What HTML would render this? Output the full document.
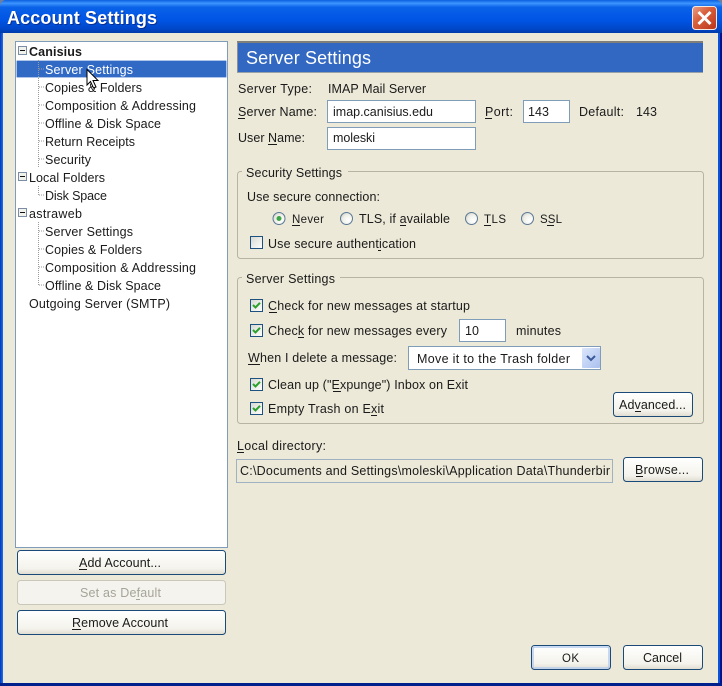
<!DOCTYPE html>
<html><head><meta charset="utf-8"><style>
html,body{margin:0;padding:0;background:#ece9d8;width:722px;height:686px;overflow:hidden}
svg{display:block}
text{font-family:"Liberation Sans",sans-serif;font-size:12.5px;fill:#1a1a1a}
text.s{font-size:11.5px}
</style></head><body>
<svg width="722" height="686" viewBox="0 0 722 686" xmlns="http://www.w3.org/2000/svg">
<defs>
<linearGradient id="tb" x1="0" y1="0" x2="0" y2="1">
<stop offset="0" stop-color="#0a5fe0"/><stop offset=".1" stop-color="#3d95ff"/><stop offset=".22" stop-color="#0a62e8"/><stop offset=".6" stop-color="#0055e5"/><stop offset=".88" stop-color="#0046c8"/><stop offset="1" stop-color="#003ca8"/>
</linearGradient>
<linearGradient id="btn" x1="0" y1="0" x2="0" y2="1">
<stop offset="0" stop-color="#fff"/><stop offset=".75" stop-color="#f4f3ec"/><stop offset="1" stop-color="#dfdbd0"/>
</linearGradient>
<linearGradient id="cl" x1="0" y1="0" x2="1" y2="1">
<stop offset="0" stop-color="#e8a08a"/><stop offset=".4" stop-color="#d9603c"/><stop offset="1" stop-color="#b8341a"/>
</linearGradient>
<linearGradient id="cb" x1="0" y1="0" x2="1" y2="1">
<stop offset="0" stop-color="#d8d8d0"/><stop offset="1" stop-color="#fff"/>
</linearGradient>
<radialGradient id="rb" cx=".65" cy=".65" r=".75">
<stop offset="0" stop-color="#fff"/><stop offset=".6" stop-color="#f0f0ea"/><stop offset="1" stop-color="#cfcfc6"/>
</radialGradient>
<linearGradient id="sel" x1="0" y1="0" x2="1" y2="1">
<stop offset="0" stop-color="#dce6fb"/><stop offset="1" stop-color="#a9c0ef"/>
</linearGradient>
<clipPath id="dirclip"><rect x="238" y="460" width="373" height="22"/></clipPath>
<g id="check">
<rect x=".5" y=".5" width="12" height="12" fill="url(#cb)" stroke="#1c5180"/>
<path d="M3 6 L5.5 8.5 L10 3.8" fill="none" stroke="#2ca02c" stroke-width="2"/>
</g>
<g id="radio">
<circle cx="0" cy="0" r="6" fill="url(#rb)" stroke="#5a7896"/>
</g>
<g id="minus">
<rect x=".5" y=".5" width="8" height="8" fill="#f2f2ec" stroke="#7a8ca6"/>
<path d="M2 4.5H7" stroke="#111" stroke-width="1"/>
</g>
</defs>

<!-- window -->
<rect width="722" height="686" fill="#0831d9"/>
<rect width="722" height="33" fill="url(#tb)"/>
<rect x="3" y="33" width="715" height="650" fill="#ece9d8"/>
<rect x="0" y="33" width="1.5" height="653" fill="#0a3fc0"/>
<rect x="1.5" y="33" width="1.5" height="650" fill="#1767e8"/>
<rect x="718" y="33" width="2" height="650" fill="#0a52d8"/>
<rect x="720" y="33" width="2" height="653" fill="#00138c"/>
<rect x="0" y="683" width="722" height="3" fill="#00208c"/>
<path d="M0 0H5Q1 1 0 6Z" fill="#6f7f9f"/><path d="M722 0H717Q721 1 722 6Z" fill="#6f7f9f"/>

<text x="8" y="25" style="font-size:18px;font-weight:bold;fill:#0a2f90" textLength="150" lengthAdjust="spacing">Account Settings</text>
<text x="7" y="24" style="font-size:18px;font-weight:bold;fill:#fff" textLength="150" lengthAdjust="spacing">Account Settings</text>

<!-- close -->
<rect x="692.5" y="6.5" width="24" height="23" rx="3" fill="url(#cl)" stroke="#f4e8e0"/>
<path d="M698.5 12 L710.5 24 M710.5 12 L698.5 24" stroke="#fff" stroke-width="3"/>

<!-- tree -->
<rect x="15.5" y="41.5" width="212" height="506" fill="#fff" stroke="#7f9db9"/>
<rect x="16.5" y="60.5" width="210" height="17" fill="#316ac5" stroke="#c3d4ee" stroke-dasharray="1 1"/>
<path d="M38.5 60V168 M39 69H44 M39 87H44 M39 105H44 M39 123H44 M39 141H44 M39 159H44 M38.5 186V195 M39 195H44 M38.5 222V285 M39 231H44 M39 249H44 M39 267H44 M39 285H44" fill="none" stroke="#9a9a9a" stroke-dasharray="1 1"/>
<use href="#minus" x="18" y="46"/>
<use href="#minus" x="18" y="172"/>
<use href="#minus" x="18" y="208"/>
<text x="29" y="56" style="font-weight:bold" textLength="53" lengthAdjust="spacing">Canisius</text>
<text x="45" y="74" style="fill:#fff" textLength="88" lengthAdjust="spacing">Server Settings</text>
<text x="45" y="92" textLength="97" lengthAdjust="spacing">Copies &amp; Folders</text>
<text x="45" y="110" textLength="151" lengthAdjust="spacing">Composition &amp; Addressing</text>
<text x="45" y="128" textLength="116" lengthAdjust="spacing">Offline &amp; Disk Space</text>
<text x="45" y="146" textLength="90" lengthAdjust="spacing">Return Receipts</text>
<text x="45" y="164" textLength="46" lengthAdjust="spacing">Security</text>
<text x="29" y="182" textLength="76" lengthAdjust="spacing">Local Folders</text>
<text x="45" y="200" textLength="62" lengthAdjust="spacing">Disk Space</text>
<text x="29" y="218" textLength="53" lengthAdjust="spacing">astraweb</text>
<text x="45" y="236" textLength="88" lengthAdjust="spacing">Server Settings</text>
<text x="45" y="254" textLength="97" lengthAdjust="spacing">Copies &amp; Folders</text>
<text x="45" y="272" textLength="151" lengthAdjust="spacing">Composition &amp; Addressing</text>
<text x="45" y="290" textLength="116" lengthAdjust="spacing">Offline &amp; Disk Space</text>
<text x="29" y="308" textLength="141" lengthAdjust="spacing">Outgoing Server (SMTP)</text>

<!-- cursor -->
<path d="M87 69.5V85L90.5 81.5L93.5 88L96 87L93 80.5H98Z" fill="#fff" stroke="#000" stroke-width="1"/>

<!-- left buttons -->
<rect x="17.5" y="550.5" width="208" height="24" rx="3" fill="url(#btn)" stroke="#1b4a78"/>
<text x="79" y="567" textLength="82" lengthAdjust="spacing">Add Account...</text>
<rect x="17.5" y="580.5" width="208" height="24" rx="3" fill="#f4f3ee" stroke="#c9c7ba"/>
<text x="80" y="597" style="fill:#a6a498" textLength="81" lengthAdjust="spacing">Set as Default</text>
<rect x="17.5" y="610.5" width="208" height="24" rx="3" fill="url(#btn)" stroke="#1b4a78"/>
<text x="72" y="627" textLength="96" lengthAdjust="spacing">Remove Account</text>

<!-- header -->
<rect x="237" y="42" width="466" height="31" fill="#3268c2"/>
<rect x="237" y="41" width="466" height="2" fill="#7f7f78"/>
<rect x="237" y="42" width="1" height="31" fill="#8a8f98"/>
<rect x="237" y="72" width="466" height="1" fill="#9aa0a8"/>
<text x="246" y="64" style="font-size:18px;fill:#fff" textLength="125" lengthAdjust="spacing">Server Settings</text>

<!-- server rows -->
<text x="238" y="93" textLength="74" lengthAdjust="spacing">Server Type:</text>
<text x="328" y="93" textLength="98" lengthAdjust="spacing">IMAP Mail Server</text>
<text x="238" y="116" textLength="79" lengthAdjust="spacing">Server Name:</text>
<rect x="327.5" y="100.5" width="148" height="22" fill="#fff" stroke="#7f9db9"/>
<text x="333" y="116" textLength="100" lengthAdjust="spacing">imap.canisius.edu</text>
<text x="485" y="116" textLength="28" lengthAdjust="spacing">Port:</text>
<rect x="523.5" y="100.5" width="46" height="22" fill="#fff" stroke="#7f9db9"/>
<text x="528" y="116" textLength="21" lengthAdjust="spacing">143</text>
<text x="579" y="116" textLength="45" lengthAdjust="spacing">Default:</text>
<text x="636" y="116" textLength="21" lengthAdjust="spacing">143</text>
<text x="238" y="142" textLength="67" lengthAdjust="spacing">User Name:</text>
<rect x="327.5" y="127.5" width="148" height="22" fill="#fff" stroke="#7f9db9"/>
<text x="333" y="142" textLength="42" lengthAdjust="spacing">moleski</text>

<!-- security group -->
<rect x="237.5" y="171.5" width="466" height="87" rx="3" fill="none" stroke="#b8b4a4"/>
<rect x="242" y="165" width="106" height="14" fill="#ece9d8"/>
<text x="246" y="177" textLength="96" lengthAdjust="spacing">Security Settings</text>
<text x="247" y="201" textLength="133" lengthAdjust="spacing">Use secure connection:</text>
<use href="#radio" x="279" y="218.5"/><circle cx="279" cy="218.5" r="2.5" fill="#3fa648"/>
<text class="s" x="292" y="223" textLength="32" lengthAdjust="spacing">Never</text>
<use href="#radio" x="346.5" y="218.5"/>
<text x="359" y="223" textLength="91" lengthAdjust="spacing">TLS, if available</text>
<use href="#radio" x="471.5" y="218.5"/>
<text class="s" x="484" y="223" textLength="22" lengthAdjust="spacing">TLS</text>
<use href="#radio" x="527.5" y="218.5"/>
<text class="s" x="540" y="223" textLength="22" lengthAdjust="spacing">SSL</text>
<rect x="250.5" y="236.5" width="12" height="12" fill="url(#cb)" stroke="#1c5180"/>
<text x="268" y="248" textLength="148" lengthAdjust="spacing">Use secure authentication</text>

<!-- server settings group -->
<rect x="237.5" y="277.5" width="466" height="146" rx="3" fill="none" stroke="#b8b4a4"/>
<rect x="242" y="271" width="98" height="14" fill="#ece9d8"/>
<text x="246" y="283" textLength="89" lengthAdjust="spacing">Server Settings</text>
<use href="#check" x="250" y="299"/>
<text x="268" y="310" textLength="202" lengthAdjust="spacing">Check for new messages at startup</text>
<use href="#check" x="250" y="324"/>
<text x="268" y="335" textLength="179" lengthAdjust="spacing">Check for new messages every</text>
<rect x="459.5" y="319.5" width="46" height="22" fill="#fff" stroke="#7f9db9"/>
<text x="465" y="335" textLength="14" lengthAdjust="spacing">10</text>
<text x="516" y="335" textLength="45" lengthAdjust="spacing">minutes</text>
<text x="248" y="362" textLength="149" lengthAdjust="spacing">When I delete a message:</text>
<rect x="408.5" y="346.5" width="192" height="23" fill="#fff" stroke="#7f9db9"/>
<text x="417" y="363" textLength="153" lengthAdjust="spacing">Move it to the Trash folder</text>
<rect x="582" y="348" width="18" height="20" rx="1" fill="url(#sel)"/>
<path d="M587 356L591 360L595 356" fill="none" stroke="#3a5a9a" stroke-width="2"/>
<use href="#check" x="250" y="378"/>
<text x="268" y="389" textLength="200" lengthAdjust="spacing">Clean up ("Expunge") Inbox on Exit</text>
<use href="#check" x="250" y="402"/>
<text x="268" y="413" textLength="116" lengthAdjust="spacing">Empty Trash on Exit</text>
<rect x="613.5" y="392.5" width="79" height="24" rx="3" fill="url(#btn)" stroke="#1b4a78"/>
<text x="619" y="409" textLength="67" lengthAdjust="spacing">Advanced...</text>

<!-- local dir -->
<text x="237" y="450" textLength="89" lengthAdjust="spacing">Local directory:</text>
<rect x="236.5" y="459.5" width="376" height="23" fill="#ece9d8" stroke="#9fb2c4"/>
<g clip-path="url(#dirclip)"><text x="240" y="475" textLength="370" lengthAdjust="spacing">C:\Documents and Settings\moleski\Application Data\Thunderbir</text></g>
<rect x="623.5" y="457.5" width="79" height="24" rx="3" fill="url(#btn)" stroke="#1b4a78"/>
<text x="635" y="474" textLength="54" lengthAdjust="spacing">Browse...</text>

<!-- OK / Cancel -->
<rect x="531.5" y="645.5" width="79" height="24" rx="3" fill="url(#btn)" stroke="#1b4a78"/>
<rect x="533" y="647" width="76" height="21" rx="2" fill="none" stroke="#b6cdf0" stroke-width="1.5"/>
<text class="s" x="562" y="662" textLength="17" lengthAdjust="spacing">OK</text>
<rect x="623.5" y="645.5" width="79" height="24" rx="3" fill="url(#btn)" stroke="#1b4a78"/>
<text x="643" y="662" textLength="39" lengthAdjust="spacing">Cancel</text>

<!-- accelerator underlines -->
<g fill="#1a1a1a">
<rect x="79" y="569" width="8" height="1"/>
<rect x="72" y="629" width="9" height="1"/>
<rect x="238" y="118" width="7" height="1"/>
<rect x="268" y="144" width="9" height="1"/>
<rect x="485" y="118" width="7" height="1"/>
<rect x="292" y="225" width="8" height="1"/>
<rect x="400" y="225" width="6" height="1"/>
<rect x="484" y="225" width="7" height="1"/>
<rect x="547" y="225" width="7" height="1"/>
<rect x="378" y="250" width="3" height="1"/>
<rect x="269" y="312" width="8" height="1"/>
<rect x="298" y="337" width="6" height="1"/>
<rect x="248" y="364" width="12" height="1"/>
<rect x="333" y="391" width="8" height="1"/>
<rect x="371" y="415" width="6" height="1"/>
<rect x="237" y="452" width="7" height="1"/>
<rect x="635" y="411" width="6" height="1"/>
<rect x="636" y="476" width="7" height="1"/>
</g>
<rect x="136" y="599" width="4" height="1" fill="#a6a498"/>
</svg>
</body></html>
